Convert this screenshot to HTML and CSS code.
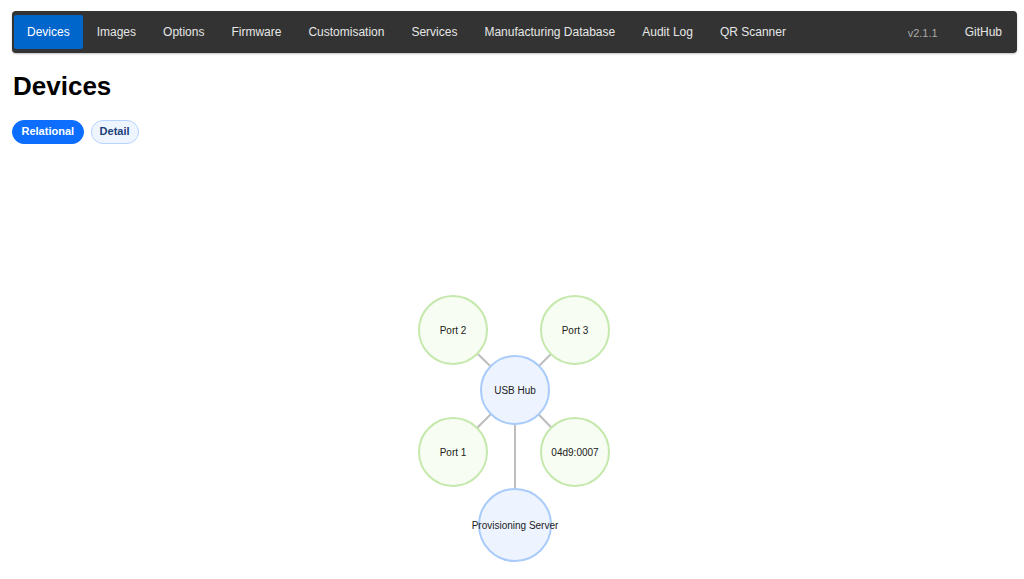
FILE: index.html
```html
<!DOCTYPE html>
<html lang="en">
<head>
    <meta charset="UTF-8">
    <meta name="viewport" content="width=device-width, initial-scale=1.0">
    <title>Devices</title>
    <link rel="stylesheet" href="styles.css">
</head>
<body>
    <div class="page">
        <!-- Top navigation -->
        <nav class="navbar">
            <div class="nav-left">
                <a class="nav-item active" href="#">Devices</a>
                <a class="nav-item" href="#">Images</a>
                <a class="nav-item" href="#">Options</a>
                <a class="nav-item" href="#">Firmware</a>
                <a class="nav-item" href="#">Customisation</a>
                <a class="nav-item" href="#">Services</a>
                <a class="nav-item" href="#">Manufacturing Database</a>
                <a class="nav-item" href="#">Audit Log</a>
                <a class="nav-item" href="#">QR Scanner</a>
            </div>
            <div class="nav-right">
                <span class="version">v2.1.1</span>
                <a class="nav-item" href="#">GitHub</a>
            </div>
        </nav>

        <h1>Devices</h1>

        <div class="view-toggle">
            <button class="pill selected">Relational</button>
            <button class="pill">Detail</button>
        </div>

        <!-- Device graph -->
        <div class="graph">
            <svg width="1005" height="429">
                <g class="edges">
                    <line x1="503" y1="240" x2="441" y2="180"/>
                    <line x1="503" y1="240" x2="563" y2="180"/>
                    <line x1="503" y1="240" x2="441" y2="302"/>
                    <line x1="503" y1="240" x2="563" y2="302"/>
                    <line x1="503" y1="240" x2="503" y2="375"/>
                </g>
                <g class="node port">
                    <circle cx="441" cy="180" r="34"/>
                    <text x="441" y="180">Port 2</text>
                </g>
                <g class="node port">
                    <circle cx="563" cy="180" r="34"/>
                    <text x="563" y="180">Port 3</text>
                </g>
                <g class="node port">
                    <circle cx="441" cy="302" r="34"/>
                    <text x="441" y="302">Port 1</text>
                </g>
                <g class="node port">
                    <circle cx="563" cy="302" r="34"/>
                    <text x="563" y="302">04d9:0007</text>
                </g>
                <g class="node hub">
                    <circle cx="503" cy="240" r="34"/>
                    <text x="503" y="240">USB Hub</text>
                </g>
                <g class="node hub">
                    <circle cx="503" cy="375" r="36"/>
                    <text x="503" y="375">Provisioning Server</text>
                </g>
            </svg>
        </div>
    </div>
</body>
</html>
```
FILE: styles.css
```css
body {
    font-family: 'Liberation Sans', Arial, sans-serif;
    background-color: #fff;
    margin: 0;
    padding: 0;
    color: #000;
    overflow: hidden;
}

.page {
    padding: 11px 7px 0 12px;
}

/* Navigation bar */
.navbar {
    display: flex;
    justify-content: space-between;
    align-items: center;
    background-color: #333;
    border-radius: 4px;
    padding: 4px 2px 4px 2px;
    box-shadow: 0 1px 2px rgba(0, 0, 0, 0.25);
}

.nav-left, .nav-right {
    display: flex;
    align-items: center;
    gap: 1px;
}

.nav-item {
    display: block;
    padding: 1px 13px 0;
    height: 33px;
    line-height: 33px;
    font-size: 12px;
    color: #e6e6e6;
    text-decoration: none;
    border-radius: 2px;
}

.nav-item.active {
    background-color: #0066cc;
    color: #fff;
}

.version {
    font-size: 11px;
    color: #aaa;
    padding: 2px 13px 0;
}

h1 {
    font-size: 26px;
    line-height: 30px;
    margin: 18px 0 0 1px;
    font-weight: bold;
}

.view-toggle {
    display: flex;
    gap: 7px;
    margin-top: 19px;
}

.pill {
    font-family: 'Liberation Sans', Arial, sans-serif;
    font-size: 11px;
    font-weight: bold;
    line-height: 13px;
    padding: 4px 8.5px 5px;
    border-radius: 12px;
    border: 1px solid #b6d4fe;
    background-color: #eef5ff;
    color: #1b3f7a;
    cursor: pointer;
}

.pill.selected {
    background-color: #0d6efd;
    border-color: #0d6efd;
    color: #fff;
}

.pill + .pill {
    padding: 4px 8px 5px;
}

.graph {
    margin-top: 6px;
}

.graph svg {
    display: block;
}

.edges line {
    stroke: #bdbdbd;
    stroke-width: 2;
}

.node circle {
    stroke-width: 2;
}

.node.port circle {
    fill: #f7fdf2;
    stroke: #c5e8ad;
}

.node.hub circle {
    fill: #edf4ff;
    stroke: #a9cbfa;
}

.node text {
    font-family: 'Liberation Sans', Arial, sans-serif;
    font-size: 10px;
    fill: #222;
    text-anchor: middle;
    dominant-baseline: central;
}
```
